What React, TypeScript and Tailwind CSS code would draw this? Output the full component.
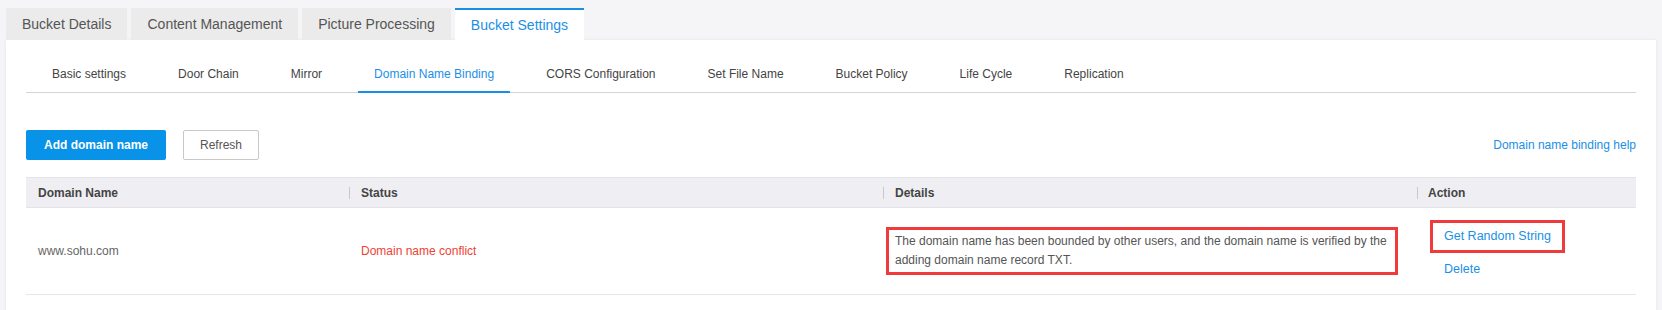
import React from 'react';

// Top-level tabs and the settings sub-navigation
const mainTabs: string[] = ['Bucket Details', 'Content Management', 'Picture Processing', 'Bucket Settings'];
const subTabs: string[] = [
  'Basic settings',
  'Door Chain',
  'Mirror',
  'Domain Name Binding',
  'CORS Configuration',
  'Set File Name',
  'Bucket Policy',
  'Life Cycle',
  'Replication',
];

const columns: string[] = ['Domain Name', 'Status', 'Details', 'Action'];

const BucketSettings: React.FC = () => {
  const activeMain = 'Bucket Settings';
  const activeSub = 'Domain Name Binding';

  return (
    <div className="min-h-screen bg-[#f5f5f7] px-[6px] pt-[8px] font-['Liberation_Sans',Arial,sans-serif]">
      {/* Main tabs */}
      <div className="flex gap-[4px]">
        {mainTabs.map((tab) => {
          const active = tab === activeMain;
          return (
            <div
              key={tab}
              className={`flex h-[32px] items-center px-[16px] text-[14px] ${
                active
                  ? 'border-t-2 border-[#1a8fe6] bg-white text-[#1a8fe6]'
                  : 'bg-[#ebebeb] text-[#555]'
              }`}
            >
              {tab}
            </div>
          );
        })}
      </div>

      {/* Panel */}
      <div className="bg-white px-[20px] pb-[30px] pt-[16px] shadow-[0_0_3px_rgba(0,0,0,0.08)]">
        {/* Sub navigation */}
        <div className="flex gap-[20px] border-b border-[#d4d4d4] pl-[10px]">
          {subTabs.map((tab) => {
            const active = tab === activeSub;
            return (
              <div
                key={tab}
                className={`-mb-px flex h-[37px] items-center border-b-2 px-[16px] text-[12px] ${
                  active ? 'border-[#1a8fe6] text-[#1a8fe6]' : 'border-transparent text-[#444]'
                }`}
              >
                {tab}
              </div>
            );
          })}
        </div>

        {/* Toolbar */}
        <div className="mt-[37px] flex items-center">
          <button className="h-[30px] w-[140px] rounded-[2px] bg-[#0892e8] text-[12px] font-bold text-white">
            Add domain name
          </button>
          <button className="ml-[17px] h-[30px] w-[76px] rounded-[2px] border border-[#c8c8c8] bg-white text-[12px] text-[#555]">
            Refresh
          </button>
          <a className="ml-auto text-[12px] text-[#1a8fe6]">Domain name binding help</a>
        </div>

        {/* Table */}
        <div className="mt-[17px]">
          <div className="grid h-[31px] grid-cols-[323px_534px_534px_1fr] border-y border-[#e3e3e8] bg-[#efeff3] text-[12px] font-bold text-[#444]">
            {columns.map((col, i) => (
              <div key={col} className="flex items-center">
                {i === 0 ? (
                  <span className="pl-[12px]">{col}</span>
                ) : (
                  <>
                    <span className="h-[12px] w-px bg-[#c8c8c8]" />
                    <span className={i === 3 ? 'ml-[10px]' : 'ml-[11px]'}>{col}</span>
                  </>
                )}
              </div>
            ))}
          </div>

          <div className="grid h-[87px] grid-cols-[323px_534px_534px_1fr] border-b border-[#e6e6e6] text-[12px]">
            <div className="flex items-center pl-[12px] text-[#666]">www.sohu.com</div>
            <div className="flex items-center pl-[12px] text-[#f04134]">Domain name conflict</div>
            <div className="flex items-center pl-[3px]">
              <div className="w-[512px] border-[3px] border-[#ef3b3b] py-[2px] pl-[6px] leading-[19px] text-[#555]">
                The domain name has been bounded by other users, and the domain name is verified by the adding
                domain name record TXT.
              </div>
            </div>
            <div className="flex flex-col pl-[13px] pt-[12px] text-[12.5px] text-[#1a8fe6]">
              <div className="flex h-[33px] w-[135px] items-center border-[3px] border-[#ef3b3b] pl-[11px]">
                Get Random String
              </div>
              <div className="mt-[8px] pl-[14px] leading-[16px]">Delete</div>
            </div>
          </div>
        </div>
      </div>
    </div>
  );
};

export default BucketSettings;
